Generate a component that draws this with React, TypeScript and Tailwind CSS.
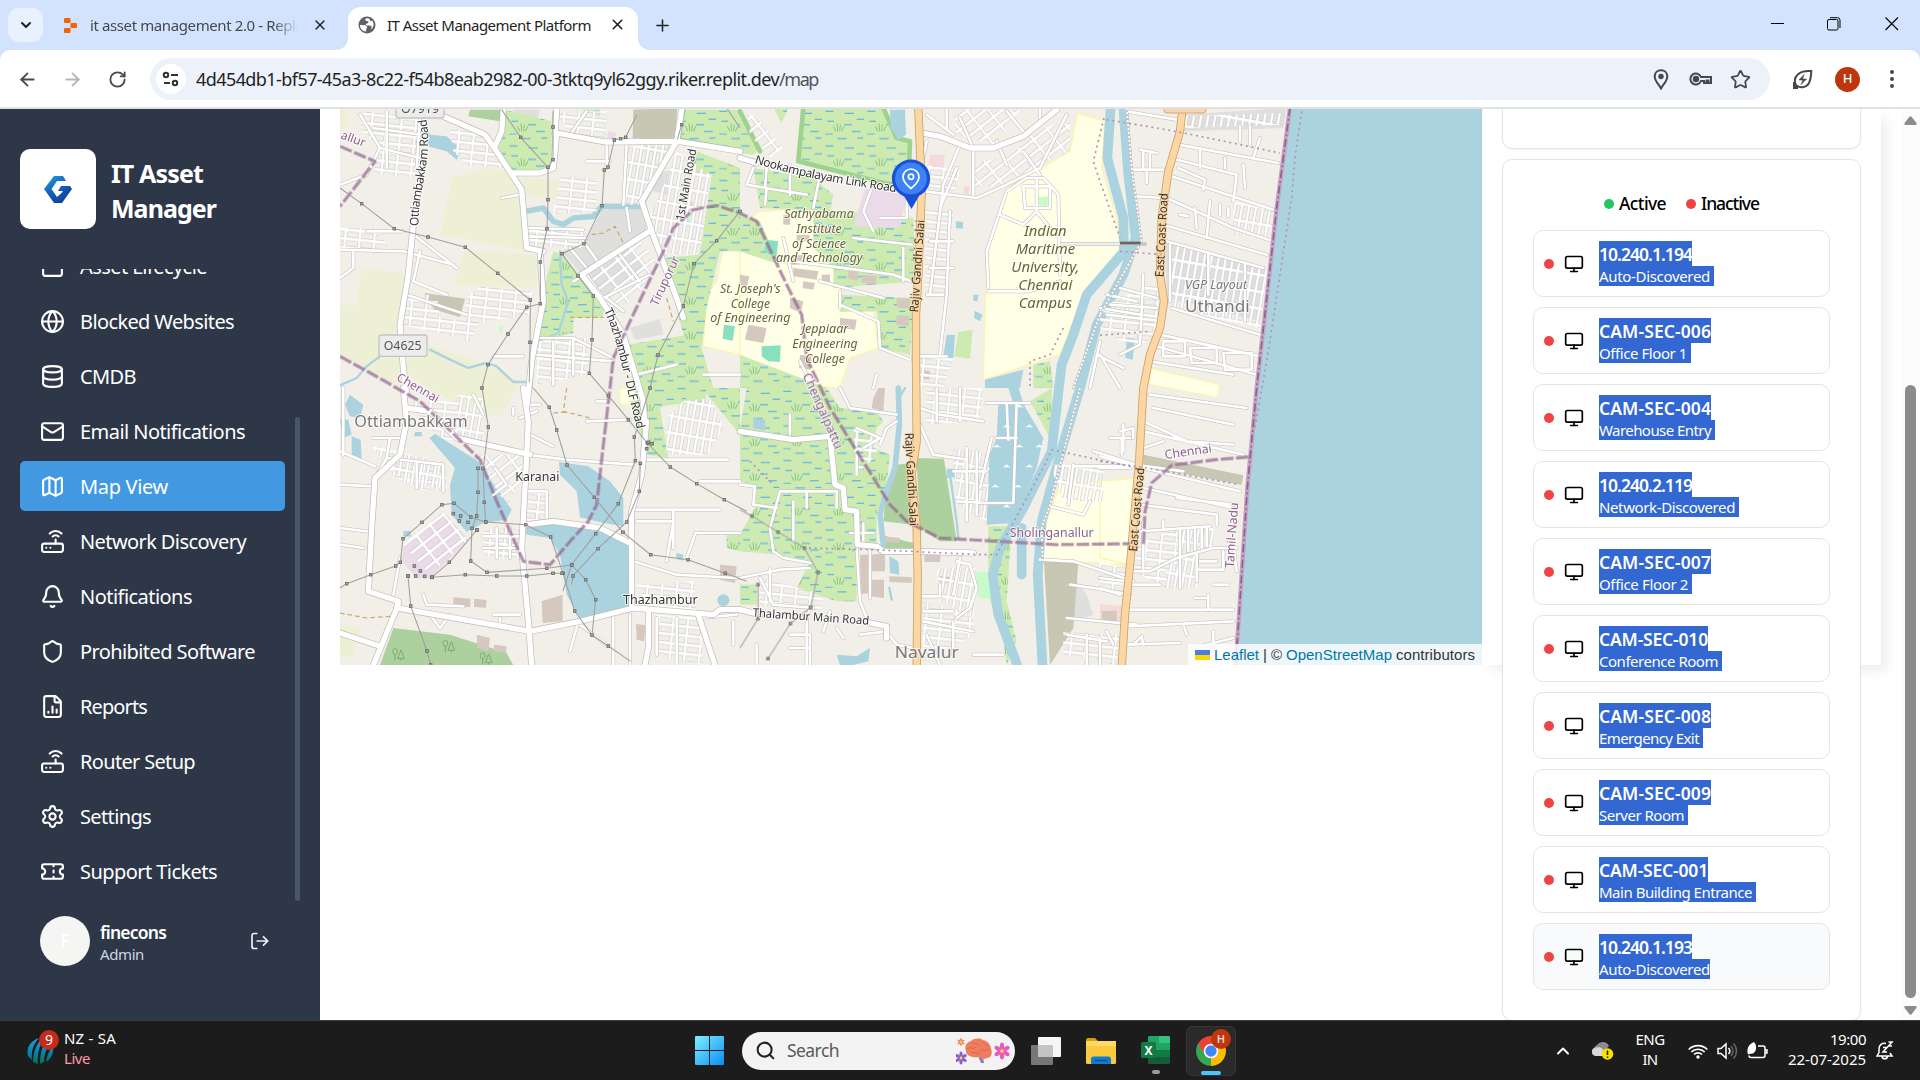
import React, { useLayoutEffect, useRef } from "react";
import {
  Archive, Globe, Database, Mail, Map as MapIcon, Router, Bell, Shield, FileChartColumn, Settings, Ticket,
  Monitor, ArrowLeft, ArrowRight, RotateCw, X, Plus, ChevronDown, ChevronUp, Star, Search,
} from "lucide-react";

/* Text whose letter spacing is adjusted so that it occupies a given width. */
function Fit({ w, children, className = "" }: { w: number; children: string; className?: string }) {
  const ref = useRef<HTMLSpanElement>(null);
  useLayoutEffect(() => {
    const el = ref.current;
    if (!el) return;
    el.style.letterSpacing = "0px";
    const natural = el.getBoundingClientRect().width;
    el.style.letterSpacing = `${(w - natural) / children.length}px`;
  }, [w, children]);
  return <span ref={ref} className={`inline-block whitespace-pre ${className}`}>{children}</span>;
}

/* ------------------------------------------------------------------ map */

type Key = "A" | "B" | "C" | "D" | "E" | "F";
const origin: Record<Key, string> = {
  A: "translate(340 108) scale(.33333)",
  B: "translate(740 108) scale(.33333)",
  C: "translate(1100 108) scale(.33333)",
  D: "translate(340 388) scale(.33333)",
  E: "translate(740 388) scale(.33333)",
  F: "translate(1100 388) scale(.33333)",
};
type Shape = [Key, string];

const Areas = ({ list, fill, stroke }: { list: Shape[]; fill: string; stroke?: string }) => (
  <>
    {list.map(([k, p], i) => (
      <polygon key={i} transform={origin[k]} points={p} fill={fill} stroke={stroke} strokeWidth={stroke ? 4 : 0} />
    ))}
  </>
);
const Lines = ({ list, color, width, dash, cap = "round" }: { list: Shape[]; color: string; width: number; dash?: string; cap?: "round" | "butt" }) => (
  <>
    {list.map(([k, d], i) => (
      <path key={i} transform={origin[k]} d={"M" + d} fill="none" stroke={color} strokeWidth={width} strokeDasharray={dash} strokeLinecap={cap} strokeLinejoin="round" />
    ))}
  </>
);

const farms: Shape[] = [
  ["A", "335,210 430,180 515,190 555,250 565,430 300,380"],
  ["A", "375,425 590,440 590,540 340,530"],
  ["A", "65,480 195,495 175,650 0,590 50,590"],
  ["A", "0,590 180,650 185,840 0,740"],
  ["A", "545,205 655,215 655,275 560,265"],
  ["A", "200,690 420,760 540,820 480,930 300,860 200,800"],
  ["A", "0,5 22,5 22,55 0,55"],
  ["D", "0,710 60,715 40,810 0,800"],
];
const greys: Shape[] = [
  ["A", "785,305 900,300 925,360 780,455 735,405"],
  ["A", "735,500 870,410 920,480 800,570"],
  ["A", "665,430 740,400 780,450 725,500"],
  ["A", "870,660 960,632 970,680 885,695"],
  ["A", "945,190 990,190 980,260 940,250"],
  ["A", "1030,280 1060,280 1060,320 1030,320"],
  ["C", "240,20 560,0 550,60 255,70"],
  ["C", "195,400 500,480 480,640 200,570"],
  ["A", "520,5 600,5 590,40 520,30"],
  ["E", "980,590 1010,580 1040,620 1060,680 1010,700 980,660"],
];
const wetlands: Shape[] = [
  ["A", "490,5 635,40 635,185 510,190 470,115"],
  ["A", "640,430 665,440 720,500 790,590 790,630 700,630 700,675 580,700 600,590"],
  ["A", "1035,5 1200,5 1200,130 1015,95"],
  ["A", "1070,130 1200,180 1200,430 1140,430 1100,600 1085,720 1120,840 1200,840 1200,980 1085,840 1030,680 970,450 1080,440 1115,200 1050,190"],
  ["A", "860,710 1045,680 1090,800 1100,880 900,900 880,840"],
  ["D", "870,40 1100,0 960,60 985,210 920,200"],
  ["D", "1160,440 1200,435 1200,490 1160,480"],
  ["B", "190,0 430,0 470,90 515,100 505,220 470,235 175,160"],
  ["B", "0,5 60,120 40,140 0,135"],
  ["B", "100,0 145,0 125,45"],
  ["B", "40,180 220,210 280,260 270,310 60,300"],
  ["B", "220,300 520,330 525,520 280,540 280,480 220,420"],
  ["B", "300,560 520,570 510,740 420,720 410,610 300,610"],
  ["B", "0,320 60,340 120,470 30,440 0,430"],
  ["B", "0,740 130,790 260,840 0,840"],
  ["E", "20,0 260,0 300,60 410,70 430,100 410,120 400,180 450,200 440,290 410,380 410,430 410,470 350,480 350,640 290,640 170,600 210,520 120,500 0,490 0,440 50,350 40,290 0,280 0,120"],
  ["E", "870,40 935,0 935,160"],
  ["E", "745,415 815,415 800,640 830,760 800,831 790,760 745,620"],
  ["E", "0,590 50,590 50,650 0,650"],
  ["B", "880,770 930,760 940,840 880,840"],
  ["A", "725,5 780,5 780,25"],
];
const parks: Shape[] = [["B", "655,672 698,665 690,752 642,745"]];
const woods: Shape[] = [
  ["A", "390,5 485,5 480,40 385,25"],
  ["D", "160,720 330,740 500,795 520,831 120,831"],
  ["E", "530,210 612,212 650,460 600,460 540,420"],
  ["E", "470,230 515,225 520,410 430,400 440,310"],
  ["E", "420,440 520,465 520,480 430,480"],
];
const edu: Shape[] = [
  ["B", "1012,15 1095,40 1085,180 1130,330 1145,430 1040,540 960,740 730,815 740,430 800,240 990,130"],
  ["A", "1150,420 1200,430 1200,740 1090,715 1100,560 1130,520"],
  ["B", "0,430 120,460 300,510 300,610 400,610 415,720 330,750 300,840 120,830 0,740"],
  ["B", "60,310 220,300 280,420 290,540 120,460 100,400 0,390 20,340"],
  ["B", "410,410 490,420 490,490 410,490"],
  ["E", "960,290 1190,270 1170,531 910,515 905,440"],
  ["C", "150,780 360,830 350,868 150,830"],
  ["D", "840,0 905,0 905,50 840,50"],
  ["F", "0,280 105,270 90,530 0,510"],
];
const browns: Shape[] = [
  ["A", "880,5 1012,0 1005,98 878,90"],
  ["A", "255,555 375,572 360,628 285,605 258,575"],
  ["E", "912,520 1015,525 1000,720 930,831"],
  ["F", "130,200 430,262 425,290 130,235"],
];
const pinks: Shape[] = [
  ["B", "375,240 500,260 480,360 340,355"],
  ["D", "310,370 385,455 270,570 230,570 185,520 190,475"],
  ["A", "805,70 830,75 820,100 800,95"],
];
const roses: Shape[] = [
  ["B", "570,140 615,140 610,180 565,175"],
  ["B", "672,235 688,235 688,260 672,260"],
  ["E", "1080,648 1150,655 1140,710 1080,700"],
  ["F", "0,650 60,655 60,710 0,705"],
];
const waters: Shape[] = [
  ["A", "260,55 270,80 320,85 365,125 350,155 320,130 262,115"],
  ["D", "30,20 70,50 60,90 30,85 15,50"],
  ["D", "35,145 62,155 65,215 35,210"],
  ["D", "0,95 25,95 35,140 10,150"],
  ["D", "285,138 415,220 455,280 515,365 500,395 430,405 380,432 335,380 330,290 345,240 268,150"],
  ["D", "657,222 745,235 810,280 850,330 850,415 790,405 720,388 710,310 660,260"],
  ["D", "555,420 640,408 780,425 865,470 868,660 720,690 680,620 660,500 630,450 560,440"],
  ["D", "190,430 212,428 212,446 190,444"],
  ["D", "225,132 245,132 245,145 222,145"],
  ["D", "1010,495 1030,500 1028,518 1008,512"],
  ["B", "450,5 495,5 498,80 475,95 452,60"],
  ["B", "620,680 645,680 640,752 610,745"],
  ["B", "648,340 670,342 668,362 648,360"],
  ["B", "700,560 716,560 712,580 700,578"],
  ["B", "704,608 728,620 720,640 702,630"],
  ["B", "735,815 850,785 840,840 735,840"],
  ["B", "1165,690 1180,700 1175,755 1160,745"],
  ["C", "80,690 104,692 98,755 76,750"],
  ["E", "775,45 845,40 910,150 890,240 820,405 740,410 748,200 770,150"],
  ["E", "620,242 642,242 645,268 620,270"],
  ["E", "448,505 475,520 478,560 450,555"],
  ["E", "290,800 350,805 390,780 385,820 340,831 300,831"],
  ["E", "40,90 75,95 75,128 40,120"],
  ["C", "570,0 530,300 497,600 470,840 442,1140 425,1400 408,1610 402,1690 1150,1690 1150,0"],
];
const greens: Shape[] = [
  ["B", "80,395 115,400 108,450 72,430"],
  ["B", "65,715 122,712 120,762 85,760 65,745"],
  ["A", "1152,650 1185,655 1178,698 1148,692"],
  ["E", "720,565 745,568 742,590 720,588"],
];
const mints: Shape[] = [
  ["E", "708,552 752,552 752,632 716,630"],
  ["B", "895,268 925,265 922,295 898,292"],
  ["A", "480,652 490,655 486,675 476,672"],
  ["A", "1025,330 1052,325 1050,350"],
];
const buildings: Shape[] = [
  ["B", "150,445 190,440 180,470 150,470"], ["B", "160,480 235,490 230,515 160,505"], ["B", "245,500 270,500 270,525 245,525"],
  ["B", "325,490 355,492 352,518 325,512"], ["B", "365,500 410,505 408,530 365,525"], ["B", "470,570 510,572 508,602 470,598"],
  ["B", "470,622 508,624 506,655 468,650"], ["B", "25,650 80,660 70,705 15,695"], ["B", "150,570 190,580 182,615 150,600"],
  ["B", "300,630 350,635 345,665 300,660"], ["B", "180,740 215,745 210,785 178,780"], ["B", "545,785 570,790 568,815 545,812"],
  ["B", "0,500 28,505 20,540 0,530"], ["B", "170,380 210,382 205,400 170,398"], ["B", "130,320 150,320 150,350 130,350"],
  ["B", "230,355 290,360 285,378 230,375"], ["B", "190,520 225,525 220,545 188,540"],
  ["E", "360,500 392,500 390,615 362,618"], ["E", "392,500 435,495 435,550 392,550"], ["E", "392,575 432,575 432,630 392,625"],
  ["E", "553,495 602,492 600,522 553,522"], ["E", "448,565 516,568 515,585 448,582"], ["E", "1085,670 1125,668 1130,700 1090,702"],
  ["E", "415,0 435,0 430,70 395,60 400,30"], ["E", "600,565 635,567 632,585 600,583"], ["E", "430,445 480,450 478,465 430,462"],
  ["D", "340,628 392,632 390,658 340,654"], ["D", "402,632 440,636 437,660 402,656"], ["D", "605,640 668,620 668,700 608,705"],
  ["D", "1140,530 1190,535 1185,585 1140,575"], ["D", "888,708 918,712 912,760 890,755"], ["D", "410,740 450,750 445,790 412,780"],
  ["D", "462,770 500,775 498,795 462,790"], ["F", "5,670 50,668 50,705 8,705"],
];

/* dense residential blocks, drawn with repeating street patterns */
const blocks0: Shape[] = [
  ["A", "70,10 250,30 235,210 100,200 120,120 60,60"],
  ["A", "330,60 430,80 470,130 500,180 390,180 340,130"],
  ["A", "560,360 745,365 735,420 565,420"],
  ["A", "420,535 575,550 570,620 370,650 380,570"],
  ["A", "195,560 290,560 300,630 420,640 390,700 190,650"],
  ["A", "0,360 110,360 150,430 0,430"],
  ["A", "650,10 800,10 795,95 690,80"],
  ["A", "665,200 770,210 770,310 640,320"],
  ["A", "590,700 740,690 740,800 590,830"],
  ["D", "200,40 360,40 400,180 280,140"],
  ["D", "140,210 315,220 320,310 230,300 150,260"],
  ["D", "430,420 540,420 535,510 435,505"],
  ["D", "560,310 620,310 620,400 560,410"],
  ["D", "890,590 1060,580 1070,680 930,660"],
  ["D", "950,680 1080,690 1090,831 945,800"],
  ["B", "560,170 660,190 640,255 560,250"],
  ["B", "560,300 640,310 620,560 555,550"],
  ["B", "540,740 640,750 610,840 540,840"],
  ["C", "0,600 170,520 180,680 100,720 0,660"],
  ["E", "560,0 730,0 720,100 560,110"],
  ["E", "340,110 410,140 410,200 350,260 345,200"],
  ["E", "550,640 700,680 700,740 550,820"],
  ["E", "60,570 250,620 240,680 60,650"],
  ["E", "970,730 1140,740 1130,831 970,800"],
  ["F", "110,470 230,420 240,520 200,600 100,550"],
  ["F", "0,520 85,540 80,640 0,600"],
];
const blocks1: Shape[] = [
  ["A", "865,115 1000,115 930,240 910,290 850,290"],
  ["A", "1010,130 1110,200 1080,440 960,435 925,330 960,260"],
  ["A", "880,200 900,110 1010,105 940,230"],
  ["D", "1030,40 1110,30 1150,120 1100,200 980,200 980,90"],
  ["D", "350,20 430,30 430,170 350,150"],
  ["D", "90,170 320,230 320,300 200,290"],
  ["E", "640,180 750,200 740,400 650,350"],
  ["E", "930,230 1090,230 1090,340 970,340"],
  ["E", "590,540 710,540 700,690 600,640"],
  ["C", "240,25 555,15 550,50 250,60"],
  ["C", "205,400 500,480 480,660 210,600"],
  ["C", "400,280 530,310 500,390 400,380"],
  ["F", "230,420 340,415 340,480 230,510"],
  ["F", "200,520 300,500 290,600 190,600"],
];
const blocks2: Shape[] = [
  ["B", "640,5 840,5 760,110 650,80"],
  ["B", "800,150 900,60 990,40 990,130 800,220"],
  ["B", "700,160 800,150 800,230 700,240"],
  ["D", "190,470 310,372 385,455 270,560"],
  ["D", "400,200 550,200 545,280 500,350 440,260"],
  ["A", "740,500 900,400 960,480 830,620"],
  ["B", "20,10 60,40 130,120 90,150 30,80"],
];

const minor: Shape[] = [
  ["A", "0,425 190,430 340,470M240,430L220,520 320,560M60,20L120,120 80,200 0,230M120,120L240,150M190,370L80,370M215,375L350,480M200,560L380,620M40,430V480L0,510"],
  ["A", "485,270L540,260M560,360L730,365M560,385L740,390M590,690L700,690 820,750M590,740L820,760M460,745H550M640,700V830M700,690V800"],
  ["A", "690,80L740,10M740,160H810M800,100V180M860,110L850,290M860,300L870,370M920,360L970,440M240,20L230,180M100,60L240,80M140,10V180"],
  ["A", "740,500L790,570 930,500M800,570L850,610M700,520L735,500M690,420L740,480M730,400L780,470M840,440L900,520M890,800L1010,770M1090,800H1200"],
  ["B", "40,180L20,230 80,240 75,290M80,180L75,240 200,260M150,170V260M240,200L220,300M395,240L370,310 400,370M500,260V330H420"],
  ["B", "340,390L515,410M120,455L460,500 515,520M240,520L430,570M300,550V600M300,590L415,640 420,720 510,755M490,420V520M130,390L160,520"],
  ["B", "555,250L710,270 800,230M560,100L540,200M660,110L610,230 570,560M700,130V260M650,180L600,300M630,310L620,560 600,740M570,400H640M570,480H640M560,560H610"],
  ["B", "700,120L660,30M770,100L800,170M850,70L800,10M900,40V5M980,20L900,180 800,230M560,20L640,80M620,5V60M850,130L900,200"],
  ["B", "745,540L740,430 800,250 860,210 910,210 955,260 960,500M745,550H870L960,520M780,320L850,350 890,310 930,360M890,210V310M850,235H930V300H855Z"],
  ["B", "520,745H620M410,800L400,840M200,800L180,760M1070,740L1150,780M1080,700L1050,840M1080,600L1200,620M1100,560L1190,580"],
  ["C", "235,110L535,165M210,150L410,200 400,280M215,205L520,305M200,270L400,360 520,400M190,350L500,440M200,400L490,480M300,120V180M330,280L320,390"],
  ["C", "80,10L230,35M100,185H190M110,265L190,270M215,600L480,680M180,680L480,745M170,715L470,800M150,760L400,800M480,90L460,150M210,410V580M325,435V560M435,470V640"],
  ["C", "30,590L170,600M20,620L190,640M60,540L170,570M130,500L120,710 60,740M0,740L60,840M190,700H255V745H190ZM270,720H350V765H275ZM370,735H455V785H375Z"],
  ["C", "235,180L315,215 310,245M375,150V180M360,290V320M385,300V325M240,320L265,325M285,300L290,360M120,125L170,135M130,130V185M150,130V180M140,185V225M430,170L435,240M420,55V100M450,55V110"],
  ["D", "0,290L100,295M105,270L140,210 310,230 310,310M140,210L150,150M230,220V300M0,420L80,430M180,510L160,620M250,620L260,650 370,655M0,470L70,480"],
  ["D", "570,140L640,175M560,200L680,215 880,230M880,365H1140M890,400H1000L980,520M880,520L1010,560 1190,570M1065,435H1200M910,215H1165M1080,280H1200"],
  ["D", "560,310H620V400M430,445H540M430,480H540M470,420V510M510,420V510M465,240L500,290 460,320M360,150L560,200M1000,370V480M1040,510L1065,440"],
  ["D", "0,190L105,235M715,700L690,790M820,680V831M870,680V831M950,690V800M1010,690V831M720,710L800,770M1080,690L1190,680M10,0V200M100,150H180"],
  ["D", "480,690V720M460,680H540M270,680L300,720 330,680M740,100L870,95M400,20L430,80M560,50H600M540,90L590,70M1180,700V770M770,40H800M520,60V80"],
  ["E", "300,0L330,60 470,80M470,100L440,120 420,170M350,120L420,150 370,180M350,200L350,260M540,60L600,80 730,100M590,0V100M660,0V100M540,110L580,200 680,215"],
  ["E", "740,45H870M770,150H830M800,45L805,155M830,45L820,345H740M650,340L740,345M680,180V400M710,190V380M640,250H740M755,150L720,300"],
  ["E", "0,290L45,295 40,350 110,360M125,310H290V360M200,310V360M160,340V460M120,310L90,420 100,490 130,510 215,525M0,570L120,545 210,540M60,570L100,650 220,660M90,540V640"],
  ["E", "350,480L360,640 380,690M390,490V630M545,625H600V590M660,510L640,620M650,520L690,530 710,600 690,660 650,690M550,670H640M550,700L700,730M560,740L600,831M640,700V800M700,800H790"],
  ["E", "150,740H210V831M150,780H210M290,720L310,750M360,740L440,730 470,770 520,780M900,515L1000,520 1180,580M930,355L1030,380 1050,340M1000,230L985,350M1000,235H1180M1060,190L1190,230"],
  ["E", "990,590L1060,600 1170,620M980,690L1190,710M980,740L1100,760M1040,740V831M1080,750V831M1110,150H1170M1150,110V190M50,770V831M200,690V831M270,670L250,730M150,80V140M330,435H400M370,405V465"],
  ["F", "150,20L440,60M160,60L400,110M130,100L260,160 400,170M130,130L430,200M130,180L190,160M0,205L70,225 250,250M130,240L420,310M130,300L400,360M120,350L350,380V410M230,330L400,350"],
  ["F", "120,430L330,415M90,550L150,550 230,510 340,480 410,480M240,420V600M265,420V490M285,420V485M305,420V480M320,420V475M90,590H180M90,665H400M80,715L400,700M70,770L240,765M280,780L400,750M130,400V550M190,400V420"],
  ["F", "325,620V665M285,630H325M340,590H385M250,710L260,740M340,730V770M290,545H370M290,500V580M350,520H300M0,600L60,620M0,570L80,580M20,730L40,770M100,770L125,745 130,770"],
  ["F", "45,150H65V200M60,130L100,120V150M0,240H90M370,490V540M400,470L410,550"],
];
const roads: Shape[] = [
  ["A", "310,25L435,80 470,130 545,245 560,420 610,430"],
  ["A", "490,5L485,70 465,115"],
  ["A", "515,195L600,195 640,180 650,75 795,102 1015,100 1200,130"],
  ["A", "650,5L645,80"],
  ["A", "1025,5L1010,100 905,280 935,370 1010,570 1030,630"],
  ["A", "725,500L935,365M725,500L780,570 850,680 910,880 915,960"],
  ["A", "225,300L215,400 205,500 180,650 190,780 200,860"],
  ["D", "190,0L200,100 180,200 105,270 95,420 85,610 175,640 170,660 570,730 720,700 880,660 1120,680 1140,665 1200,665"],
  ["D", "175,650L100,831M0,735L120,775"],
  ["D", "200,60L270,70 350,150 570,200"],
  ["D", "550,0L565,100 555,300 545,480 565,700 575,831"],
  ["D", "560,410L640,400 780,420 870,465"],
  ["D", "920,100L905,260 875,370 875,660"],
  ["D", "925,670V780L915,831M1075,680L1125,831"],
  ["B", "0,150L50,165"],
  ["B", "545,75L600,85 690,120 760,120 850,85 950,5"],
  ["E", "0,130L160,155 270,145 285,290 310,300 315,365 350,370 352,470 410,475 430,490 530,490 700,495"],
  ["E", "0,665L60,680M390,705L440,715 440,750"],
  ["A", "600,430L610,580 575,760 560,900"],
];
const railway: Shape[] = [["C", "80,0L95,180 125,400 0,620M0,620L-80,840"], ["E", "1020,0L930,350 905,420 908,520"]];
const canals: Shape[] = [
  ["B", "1112,0L1102,150 1150,330 1152,430 1040,560 1000,680 965,770 945,940 935,1030 850,1200 780,1320 758,1400 775,1520 835,1680"],
  ["B", "1150,0L1165,200 1187,390 1150,500 1070,650 1020,840 960,1040 905,1240 893,1400 908,1680"],
  ["E", "820,0L840,60M845,420L845,560"],
];
const streams: Shape[] = [
  ["A", "560,310L610,300 640,340 670,350 700,330 760,325 785,295 900,295"],
  ["E", "475,0L478,110 465,240 440,310 420,380 430,470"],
];
const creeks: Shape[] = [
  ["A", "270,725L330,755 385,780 440,765 470,775 520,822 560,822M0,832L50,810 80,775 120,745"],
  ["A", "660,430L665,530 685,580 655,675 580,705 575,840M1015,100L915,280"],
  ["E", "630,260L650,400 655,450M448,600L455,635M495,0L478,30"],
];
const orange: Shape[] = [
  ["B", "535,0L545,250 535,500 528,620 528,760 530,1000 515,1100 530,1260 533,1400 530,1680"],
  ["C", "248,0L240,70 205,190 185,330 180,500 192,580 180,660 150,740 130,840 118,1050 92,1350 75,1520 65,1680"],
];
const coast: Shape[] = [["C", "570,0L530,300 497,600 470,840 442,1140 425,1400 416,1540 405,1690"]];
const boundary: Shape[] = [
  ["A", "0,115L105,160 0,295"],
  ["A", "0,745L100,800 240,880 420,1055 470,1180 550,1360 630,1370 690,1300 745,1240 770,1190 790,1010 810,840 820,750 870,640 970,430 1000,360 1060,305 1130,292 1200,315 1250,340 1340,530 1385,620 1400,750 1470,900 1650,1190 1700,1240 1800,1290 2150,1310 2370,1307"],
  ["F", "130,468L135,370 155,285 215,232 345,215 445,207"],
];
const dotted: Shape[] = [
  ["B", "1092,30L1060,160 1080,220 1140,390M970,660L930,740 870,760V840"],
  ["C", "20,35L200,65 350,95 540,135M60,430L190,440M0,682L150,670M605,10L585,150 575,270 555,400 525,600 500,760 465,960"],
  ["E", "190,480L400,485 720,500 770,500 800,440 920,220 935,185 1190,240M30,220L100,290"],
  ["F", "0,220L140,240 420,290"],
];
const power: Shape[] = [
  ["A", "0,240L65,287 163,362 264,387 376,418 473,496 571,576 570,703 568,823"],
  ["A", "485,5L542,88 624,178"],
  ["A", "639,10V57L639,155 624,178 624,275 621,362 601,462 601,587 560,598 504,678 444,770 426,840 445,957 430,1080"],
  ["A", "890,22L857,88 842,92 823,96 804,177 793,186 786,293 732,407 666,437 714,504 760,564 756,695 748,796 805,863 865,935 922,1005 991,1077 1070,1127 1153,1175 1220,1210"],
  ["A", "1012,95L1025,50M1200,310L1130,398 1062,467 1030,594 954,741 930,840 883,987 886,1058 835,1187 767,1277 695,1370 669,1449"],
  ["A", "1160,0L1200,60"],
  ["D", "580,0L628,58 650,126 681,231 763,328 849,433 932,500 1044,515 1156,556 1220,580"],
  ["D", "0,600L20,587 92,560 167,534 181,523 189,452 246,403 306,350 342,346 392,387 437,402 557,410 632,447 669,556 704,669 756,741 805,774 872,820"],
  ["D", "414,241V313L410,384 396,421 392,519 441,553 620,541 695,531 737,575 767,635 756,741"],
  ["D", "429,241L433,343 437,402M328,523L411,426M204,564L212,654 261,789 272,831M276,568L376,560 470,564 560,564 639,556 666,556M275,568L328,523"],
  ["D", "901,226L898,310 860,402 774,482 699,564 695,590"],
  ["E", "0,365L36,384 114,432 193,480 234,553 212,658 151,707 84,812M54,590V692L0,780"],
];
/* isolated pylons around the two substations */
const pylons = [[340, 377], [362, 384], [358, 399], [384, 403], [223, 534], [241, 549], [227, 564], [254, 565], [204, 564], [276, 568], [414, 241], [429, 241], [411, 426], [901, 226], [925, 163], [936, 167], [920, 182]];

type Label = { k: Key; t: string; x: number; y: number; s: number; w: number; c: string; r?: number; i?: boolean };
const dark = "#333333", purple = "#8d618b", olive = "#66662f", grey = "#777777";
const labels: Label[] = [
  { k: "A", t: "allur", x: 36, y: 104, s: 36, w: 76, c: purple, r: 20 },
  { k: "A", t: "Tiruporur", x: 986, y: 524, s: 36, w: 160, c: purple, r: -65 },
  { k: "A", t: "1st Main Road", x: 1050, y: 232, s: 35, w: 218, c: dark, r: -80 },
  { k: "A", t: "Chennai", x: 228, y: 850, s: 36, w: 140, c: purple, r: 30 },
  { k: "B", t: "Sathyabama", x: 237, y: 330, s: 38, w: 208, c: olive, i: true },
  { k: "B", t: "Institute", x: 237, y: 374, s: 38, w: 136, c: olive, i: true },
  { k: "B", t: "of Science", x: 237, y: 419, s: 38, w: 162, c: olive, i: true },
  { k: "B", t: "and Technology", x: 238, y: 463, s: 38, w: 260, c: olive, i: true },
  { k: "B", t: "St. Joseph's", x: 31, y: 555, s: 38, w: 182, c: olive, i: true },
  { k: "B", t: "College", x: 31, y: 599, s: 38, w: 118, c: olive, i: true },
  { k: "B", t: "of Engineering", x: 31, y: 643, s: 38, w: 240, c: olive, i: true },
  { k: "B", t: "Jeppiaar", x: 255, y: 674, s: 38, w: 140, c: olive, i: true },
  { k: "B", t: "Engineering", x: 255, y: 719, s: 38, w: 196, c: olive, i: true },
  { k: "B", t: "College", x: 255, y: 764, s: 38, w: 120, c: olive, i: true },
  { k: "B", t: "Indian", x: 916, y: 385, s: 45, w: 128, c: olive, i: true },
  { k: "B", t: "Maritime", x: 916, y: 438, s: 45, w: 178, c: olive, i: true },
  { k: "B", t: "University,", x: 916, y: 492, s: 45, w: 204, c: olive, i: true },
  { k: "B", t: "Chennai", x: 916, y: 545, s: 45, w: 162, c: olive, i: true },
  { k: "B", t: "Campus", x: 916, y: 599, s: 45, w: 160, c: olive, i: true },
  { k: "B", t: "Rajiv Gandhi Salai", x: 544, y: 475, s: 36, w: 278, c: dark, r: -86 },
  { k: "E", t: "Rajiv Gandhi Salai", x: 502, y: 275, s: 36, w: 280, c: dark, r: 87 },
  { k: "C", t: "East Coast Road", x: 197, y: 382, s: 36, w: 252, c: dark, r: -87 },
  { k: "C", t: "VGP Layout", x: 348, y: 543, s: 36, w: 186, c: grey, i: true },
  { k: "C", t: "Uthandi", x: 352, y: 613, s: 51, w: 194, c: grey },
  { k: "D", t: "Ottiambakkam", x: 213, y: 116, s: 48, w: 340, c: grey },
  { k: "D", t: "Karanai", x: 592, y: 279, s: 39, w: 132, c: dark },
  { k: "D", t: "Thazhambur", x: 961, y: 647, s: 39, w: 224, c: dark },
  { k: "E", t: "Thalambur Main Road", x: 212, y: 698, s: 35, w: 350, c: dark, r: 4 },
  { k: "E", t: "Navalur", x: 560, y: 809, s: 51, w: 192, c: grey },
  { k: "E", t: "Sholinganallur", x: 935, y: 446, s: 37, w: 252, c: purple },
  { k: "E", t: "Chengalpattu", x: 236, y: 74, s: 36, w: 245, c: purple, r: 66 },
  { k: "F", t: "Chennai", x: 266, y: 203, s: 37, w: 142, c: purple, r: -8 },
  { k: "F", t: "East Coast Road", x: 122, y: 366, s: 36, w: 252, c: dark, r: -85 },
  { k: "F", t: "Tamil-Nadu", x: 408, y: 442, s: 37, w: 196, c: purple, r: -86 },
];
const curved: { k: Key; id: string; d: string; t: string; w: number }[] = [
  { k: "A", id: "otti", d: "M227,354C222,250 272,150 250,36", t: "Ottiambakkam Road", w: 322 },
  { k: "A", id: "dlf", d: "M800,604C837,680 852,760 868,830S890,920 900,964", t: "Thazhambur - DLF Road", w: 372 },
  { k: "B", id: "nook", d: "M45,156C200,206 350,224 470,244", t: "Nookampalayam Link Road", w: 434 },
];

const Tuft = ({ x, y }: { x: number; y: number }) => (
  <path d={`M${x},${y}l-8,-15M${x + 5},${y}l-2,-23M${x + 11},${y}l2,-21M${x + 16},${y}l8,-15`} stroke="#86c486" strokeWidth="3" fill="none" />
);

const CityMap = () => (
  <svg className="block h-full w-full" viewBox="340 109 1142 556" fontFamily="'Noto Sans', sans-serif">
    <defs>
      <pattern id="wet" width="126" height="104" patternUnits="userSpaceOnUse">
        <rect width="126" height="104" fill="#cdebb0" />
        <path d="M4,10h24M62,16h28M98,34h22M10,40h20M60,50h24M84,70h26M4,78h22M40,92h28M100,90h18" stroke="#62b3ea" strokeWidth="3.6" />
        <Tuft x={36} y={70} />
      </pattern>
      <pattern id="b0" width="44" height="27" patternUnits="userSpaceOnUse" patternTransform="rotate(6)">
        <path d="M0,10H44M12,0V27" stroke="#c2c0be" strokeWidth="11" />
        <path d="M0,10H44M12,0V27" stroke="#fff" strokeWidth="8" />
      </pattern>
      <pattern id="b1" width="21" height="50" patternUnits="userSpaceOnUse" patternTransform="rotate(10)">
        <path d="M0,10H21M9,0V50" stroke="#c2c0be" strokeWidth="11" />
        <path d="M0,10H21M9,0V50" stroke="#fff" strokeWidth="8" />
      </pattern>
      <pattern id="b2" width="52" height="32" patternUnits="userSpaceOnUse" patternTransform="rotate(-38)">
        <path d="M0,10H52M12,0V32" stroke="#c2c0be" strokeWidth="11" />
        <path d="M0,10H52M12,0V32" stroke="#fff" strokeWidth="8" />
      </pattern>
      <marker id="pole" markerWidth="12" markerHeight="12" refX="6" refY="6" markerUnits="userSpaceOnUse">
        <rect x="2" y="2" width="8" height="8" fill="#aaa" stroke="#666" strokeWidth="2.5" />
      </marker>
      {curved.map((c) => <path key={c.id} id={c.id} d={c.d} />)}
    </defs>
    <rect x="340" y="109" width="1142" height="556" fill="#f2efe9" />
    <Areas list={farms} fill="#eef0d5" />
    <Areas list={greys} fill="#dfdfde" />
    <Areas list={edu} fill="#ffffe5" stroke="#faf5b0" />
    <Areas list={wetlands} fill="url(#wet)" />
    <Areas list={parks} fill="#cdebb0" />
    <Lines list={[["B", "190,0L175,160 470,235 505,220 510,100 470,90 430,0M0,10L60,130"], ["A", "1030,5L1015,95 1200,130"]]} color="#9ed28f" width={14} />
    <Areas list={woods} fill="#add19e" />
    <Areas list={browns} fill="#c7c7b4" />
    <Areas list={pinks} fill="#ebdbe8" />
    <Areas list={roses} fill="#f6d9d9" />
    <Areas list={buildings} fill="#d4c8bf" />
    <Areas list={waters} fill="#aad3df" />
    <Areas list={greens} fill="#88e0be" />
    <Areas list={mints} fill="#c8facc" />
    <circle transform={origin.D} cx="1150" cy="637" r="18" fill="#aad3df" />
    <Lines list={canals} color="#aad3df" width={29} />
    <Lines list={streams} color="#aad3df" width={17} />
    <Lines list={creeks} color="#aad3df" width={7} />
    <Areas list={blocks0} fill="url(#b0)" />
    <Areas list={blocks1} fill="url(#b1)" />
    <Areas list={blocks2} fill="url(#b2)" />
    <Lines list={minor} color="#bdbbb9" width={11} />
    <Lines list={minor} color="#ffffff" width={8} />
    <Lines list={roads} color="#bdbbb9" width={20} />
    <Lines list={roads} color="#ffffff" width={16} />
    <Lines list={railway} color="#bcbcbc" width={7} />
    <Lines list={railway} color="#ffffff" width={5} dash="7 5" cap="butt" />
    <g transform={origin.B} fill="none">
      <path d="M960,408H1220" stroke="#c4c4c4" strokeWidth="10" />
      <path d="M960,408H1140" stroke="#eee" strokeWidth="6" />
      <path d="M1140,405H1202" stroke="#666" strokeWidth="8" />
    </g>
    <g transform={origin.E} fill="#fff">
      {[[838, 58], [800, 118], [868, 118], [770, 178], [838, 178], [898, 178], [800, 238], [868, 238], [766, 298], [834, 298], [800, 358]].map(([x, y], i) => (
        <path key={i} d={`M${x - 13},${y}q7,-1 13,-9q6,8 13,9z`} />
      ))}
    </g>
    <Lines list={[["A", "690,628H790M755,380L790,375 825,355 850,405M980,570L1000,640"], ["D", "0,675L80,690 155,685M680,0L670,70 750,90M640,75L680,72"]]} color="#c9a76a" width={3.5} dash="14 9" cap="butt" />
    <Lines list={orange} color="#c9a360" width={25} />
    <Lines list={orange} color="#fcd6a4" width={20} />
    <Lines list={coast} color="#c3a3c3" width={13} />
    <Lines list={coast} color="#935f93" width={5} dash="24 9 5 9" cap="butt" />
    <g opacity=".72"><Lines list={boundary} color="#93658f" width={9.5} dash="38 8" cap="butt" /></g>
    <Lines list={dotted} color="#b191b6" width={5} dash="6 11" cap="butt" />
    {power.map(([k, d], i) => (
      <path key={i} transform={origin[k]} d={"M" + d} fill="none" stroke="#a0a09d" strokeWidth="3.2" markerMid="url(#pole)" />
    ))}
    <g transform={origin.D} fill="#aaa" stroke="#666" strokeWidth="2.500">
      {pylons.map(([x, y], i) => <rect key={i} x={x - 4} y={y - 4} width="8" height="8" />)}
    </g>
    <g transform={origin.D} fill="none" stroke="#7ba972" strokeWidth="3">
      {[[165, 800], [316, 775], [428, 812]].map(([x, y], i) => (
        <path key={i} d={`M${x},${y + 18}v-18a7,9 0 1 1 .1,0M${x + 18},${y + 18}v-6M${x + 18},${y - 14}l-10,26h20z`} />
      ))}
    </g>
    <g textAnchor="middle" strokeLinejoin="round">
      {labels.map((l, i) => (
        <text key={i} transform={`${origin[l.k]} translate(${l.x} ${l.y}) rotate(${l.r || 0})`} fontSize={l.s} textLength={l.w} lengthAdjust="spacingAndGlyphs" fill={l.c} stroke={l.t.startsWith("Rajiv") || l.t.startsWith("East") ? "#fcd6a4" : "#ffffff"} strokeOpacity=".75" strokeWidth="6" paintOrder="stroke" fontStyle={l.i ? "italic" : "normal"}>{l.t}</text>
      ))}
    </g>
    {curved.map((c) => (
      <text key={c.id} transform={origin[c.k]} fontSize="36" fill={dark} stroke="#fff" strokeOpacity=".8" strokeWidth="6" paintOrder="stroke" dy="9">
        <textPath href={`#${c.id}`} textLength={c.w}>{c.t}</textPath>
      </text>
    ))}
    <g transform={origin.A} fill="#ececec" stroke="#c3c3c3" strokeWidth="4" fontSize="37">
      <rect x="168" y="-26" width="144" height="56" rx="8" />
      <rect x="117" y="681" width="144" height="64" rx="8" />
      <text x="183" y="16" textLength="114" fill="#555" stroke="none">O7919</text>
      <text x="131" y="726" textLength="114" fill="#555" stroke="none">O4625</text>
    </g>
    <rect x="1164" y="103" width="42" height="10" rx="3" fill="#f8d5b0" stroke="#d8a878" />
    <path d="M904,196h15l-7.500,13z" fill="#1d4ed8" />
    <circle cx="911" cy="178.500" r="17.500" fill="#3b82f6" stroke="#1d4ed8" strokeWidth="3.200" />
    <path d="M919,177c0,5-5.500,9.500-8,11.500c-2.500-2-8-6.500-8-11.500a8,8 0 0 1 16,0z" fill="none" stroke="#fff" strokeWidth="1.700" />
    <circle cx="911" cy="176.800" r="2.600" fill="none" stroke="#fff" strokeWidth="1.700" />
  </svg>
);

/* -------------------------------------------------------------- browser */

const Replit = () => (
  <svg className="ml-[21px] h-[15px] w-[13px]" viewBox="0 0 13 15" fill="#f26207">
    <rect width="6.500" height="5" rx="1" /><rect x="6.500" y="5" width="6.500" height="5" rx="1" /><rect y="10" width="6.500" height="5" rx="1" />
  </svg>
);

const TabStrip = () => (
  <div className="flex h-[50px] items-start bg-[#d3e3fd] text-[15px] text-[#1f1f1f]">
    <div className="mt-2 ml-2 flex h-[34px] w-[35px] items-center justify-center rounded-[11px] bg-[#e9f1fe]">
      <ChevronDown size={16} strokeWidth={3} />
    </div>
    <div className="mt-[7px] flex h-[36px] w-[293px] items-center">
      <Replit />
      <div className="ml-[13px] w-[208px] overflow-hidden [mask-image:linear-gradient(to_right,black_88%,transparent)]">
        <Fit w={214} className="text-[#45494e]">it asset management 2.0 - Replit</Fit>
      </div>
      <X className="ml-[14px]" size={16} strokeWidth={2} />
    </div>
    <div className="mt-[37px] h-[13px] w-3 bg-white"><div className="h-full w-full rounded-br-[12px] bg-[#d3e3fd]" /></div>
    <div className="mt-[7px] flex h-[43px] w-[290px] items-start rounded-t-[13px] bg-white">
      <svg className="mt-[9px] ml-[10px]" width="18" height="18" viewBox="0 0 18 18">
        <circle cx="9" cy="9" r="8.500" fill="#5f6368" />
        <path d="M2,9c2,0 3,.5 5,0c1,1 2,1 2,2s-1,1.500-1,4.500C4,15 2,12.500 2,9zM7,3c1,1 0,2 2,2s2,2 0,2.500s-1,2 .5,2s3.500-.5 4,1s-1,3-1,3C16,12 16.500,7 14,4.500C12,6 11,4 12,3C10,2 8.500,2 7,3z" fill="#fff" />
      </svg>
      <div className="mt-[7px] ml-[11px]"><Fit w={204}>IT Asset Management Platform</Fit></div>
      <X className="mt-[9px] ml-[18px]" size={17} strokeWidth={2.2} />
    </div>
    <div className="mt-[37px] h-[13px] w-3 bg-white"><div className="h-full w-full rounded-bl-[12px] bg-[#d3e3fd]" /></div>
    <Plus className="mt-[16px] ml-[3px]" size={19} strokeWidth={1.9} />
    <div className="mt-[17px] mr-[21px] ml-auto flex gap-[44px] text-black">
      <svg className="-mr-[2px]" width="16" height="14" viewBox="0 0 16 14"><path d="M2,6.500H15" stroke="currentColor" /></svg>
      <svg width="14" height="14" viewBox="0 0 14 14" fill="none" stroke="currentColor"><rect x=".5" y="2.500" width="10.500" height="10.500" rx="1.500" /><path d="M3,.7H10.500a2.500,2.500 0 0 1 2.500,2.500V11" /></svg>
      <svg width="14" height="14" viewBox="0 0 14 14"><path d="M.5,.5L13,13M13,.5L.5,13" stroke="currentColor" strokeWidth="1.100" /></svg>
    </div>
  </div>
);

const Toolbar = () => (
  <div className="bg-[#d3e3fd]">
    <div className="flex h-[57px] items-center rounded-t-[10px] bg-white pt-px text-[#45484c]">
      <ArrowLeft className="ml-[17px]" size={21} strokeWidth={2.1} />
      <ArrowRight className="ml-[24px] text-[#b4b5b6]" size={21} strokeWidth={2.1} />
      <RotateCw className="ml-[25px]" size={19} strokeWidth={2.3} />
      <div className="ml-[23px] flex h-[42px] w-[1620px] items-center rounded-full bg-[#ecf1fa]">
        <div className="ml-[6px] flex h-[30px] w-[30px] items-center justify-center rounded-full bg-white">
          <svg width="18" height="18" viewBox="0 0 18 18" fill="none" stroke="#303336" strokeWidth="2"><circle cx="4" cy="5" r="2.200" /><path d="M9,5h7M2,13h6" /><circle cx="13" cy="13" r="2.200" /></svg>
        </div>
        <div className="ml-[10px] text-[18px] text-[#1f1f1f]">
          <Fit w={583}>4d454db1-bf57-45a3-8c22-f54b8eab2982-00-3tktq9yl62ggy.riker.replit.dev</Fit>
          <Fit w={39} className="text-[#50545a]">/map</Fit>
        </div>
        <svg className="ml-auto" width="16" height="21" viewBox="0 0 16 21"><path d="M8,1.200c4,0 6.300,2.900 6.300,6.300C14.300,12 10,15.500 8,19.500C6,15.500 1.700,12 1.700,7.500C1.700,4.100 4,1.200 8,1.200z" fill="none" stroke="currentColor" strokeWidth="2" /><circle cx="8" cy="7.500" r="2.700" fill="currentColor" /></svg>
        <svg className="ml-[20px]" width="24" height="16" viewBox="0 0 24 16" fill="none" stroke="currentColor" strokeWidth="2"><path d="M12,6H22V12H19.500V9.500H17.500V12H15V10H12a5.500,5.500 0 1 1 0,-4z" /><circle cx="7" cy="8" r="2.200" fill="currentColor" /></svg>
        <Star className="mr-[19px] ml-[17px]" size={21} strokeWidth={2} />
      </div>
      <svg className="ml-[22px]" width="21" height="21" viewBox="0 0 21 21" fill="none" stroke="currentColor" strokeWidth="2"><path d="M2,19l2.500-2.500c4,3 9,2 11.500-1c3-3.500 3-9 3.300-13.500c-5-.4-10,0-13.500,3.500c-3.500,3-4,8-1.300,11M2,13v6h4" /><path d="M12,5.500L7,11h4L9,15.500L14.500,10h-4z" fill="currentColor" strokeWidth=".6" /></svg>
      <div className="ml-[22px] flex h-[25px] w-[25px] items-center justify-center rounded-full bg-[#bf360c] text-[13px] font-medium text-white">H</div>
      <div className="ml-[30px] flex w-1 flex-col gap-[3px]">
        <i className="h-1 w-1 rounded-full bg-[#45484c]" /><i className="h-1 w-1 rounded-full bg-[#45484c]" /><i className="h-1 w-1 rounded-full bg-[#45484c]" />
      </div>
    </div>
    <div className="h-[2px] bg-[#dfe1e2]" />
  </div>
);

/* -------------------------------------------------------------- sidebar */

const nav = [
  { label: "Asset Lifecycle", Icon: Archive, w: 127 },
  { label: "Blocked Websites", Icon: Globe, w: 154 },
  { label: "CMDB", Icon: Database, w: 56 },
  { label: "Email Notifications", Icon: Mail, w: 165 },
  { label: "Map View", Icon: MapIcon, w: 88, active: true },
  { label: "Network Discovery", Icon: Router, w: 166 },
  { label: "Notifications", Icon: Bell, w: 112 },
  { label: "Prohibited Software", Icon: Shield, w: 175 },
  { label: "Reports", Icon: FileChartColumn, w: 67 },
  { label: "Router Setup", Icon: Router, w: 115 },
  { label: "Settings", Icon: Settings, w: 71 },
  { label: "Support Tickets", Icon: Ticket, w: 137 },
];
const RouterWifi = () => (
  <svg width="25" height="25" viewBox="0 0 24 24" fill="none" stroke="currentColor" strokeWidth="2" strokeLinecap="round" strokeLinejoin="round">
    <rect width="20" height="8" x="2" y="14" rx="2" /><path d="M6.010 18H6M10.010 18H10M15 10v4M17.840 7.170a4 4 0 0 0-5.660 0M20.660 4.340a8 8 0 0 0-11.310 0" />
  </svg>
);
const TicketIcon = () => (
  <svg width="25" height="25" viewBox="0 0 24 24" fill="none" stroke="currentColor" strokeWidth="2" strokeLinecap="round" strokeLinejoin="round">
    <path d="M2 9a3 3 0 0 1 0 6v2a2 2 0 0 0 2 2h16a2 2 0 0 0 2-2v-2a3 3 0 0 1 0-6V7a2 2 0 0 0-2-2H4a2 2 0 0 0-2 2ZM13 5v2M13 17v2M13 11v2" />
  </svg>
);

const Sidebar = () => (
  <aside className="flex h-full w-[320px] shrink-0 flex-col bg-[#2d3748] text-white">
    <div className="flex h-[160px] items-center pl-5">
      <div className="flex h-[80px] w-[76px] items-center justify-center rounded-[10px] bg-white">
        <svg width="28" height="27" viewBox="0 0 28 27">
          <defs><linearGradient id="lg" x1="0" y1="0" x2=".7" y2="1"><stop offset="0" stopColor="#20a4ea" /><stop offset=".55" stopColor="#1160b8" /><stop offset="1" stopColor="#143f94" /></linearGradient></defs>
          <path d="M10,0H19L22,5H13L7.500,13L13,21L17,17.500L19,15H14L17,10H26L28,13L18,27H10L0,13z" fill="url(#lg)" />
        </svg>
      </div>
      <div className="ml-[15px] flex flex-col pt-[3px] text-[25px] leading-[35px] font-bold">
        <div><Fit w={92}>IT Asset</Fit></div>
        <div><Fit w={105}>Manager</Fit></div>
      </div>
    </div>
    <div className="flex h-[632px] overflow-hidden">
      <nav className="-mt-[28px] ml-5 flex w-[265px] shrink-0 flex-col gap-[5px]">
        {nav.map(({ label, Icon, w, active }) => (
          <div key={label} className={`flex h-[50px] shrink-0 items-center gap-[15px] rounded-[5px] pl-5 text-[20px] ${active ? "bg-[#4299e1]" : ""}`}>
            {Icon === Router ? <RouterWifi /> : Icon === Ticket ? <TicketIcon /> : label === "Asset Lifecycle" ? (
              <svg width="25" height="25" viewBox="0 0 24 24" fill="none" stroke="currentColor" strokeWidth="2"><rect x="3" y="3" width="18" height="18" rx="2" /></svg>
            ) : <Icon size={25} strokeWidth={2} />}
            <Fit w={w} className="pt-[2px]">{label}</Fit>
          </div>
        ))}
      </nav>
      <div className="mt-[148px] ml-[10px] h-[484px] w-[5px] rounded-full bg-[#4a5568]" />
    </div>
    <div className="mt-[15px] flex h-[50px] items-center pl-10">
      <div className="flex h-[50px] w-[50px] items-center justify-center rounded-full bg-[#f5f5f4] text-[17px] font-semibold text-white">F</div>
      <div className="ml-[10px] flex w-[149px] flex-col pt-[2px]">
        <div className="text-[17.500px] leading-[23px] font-semibold"><Fit w={66}>finecons</Fit></div>
        <div className="text-[15px] leading-[20px] text-[#cbd5e0]"><Fit w={44}>Admin</Fit></div>
      </div>
      <svg width="20" height="20" viewBox="0 0 20 20" fill="none" stroke="#edf0f4" strokeWidth="1.700"><path d="M8.500,2.500H5a2,2 0 0 0-2,2V15.500a2,2 0 0 0 2,2H8.500M7.500,10H18.500M14,5.300L18.700,10L14,14.700" /></svg>
    </div>
  </aside>
);

/* --------------------------------------------------------- device panel */

const devices: [string, number, string, number][] = [
  ["10.240.1.194", 93, "Auto-Discovered", 115],
  ["CAM-SEC-006", 112, "Office Floor 1", 92],
  ["CAM-SEC-004", 112, "Warehouse Entry", 116],
  ["10.240.2.119", 93, "Network-Discovered", 140],
  ["CAM-SEC-007", 112, "Office Floor 2", 93],
  ["CAM-SEC-010", 109, "Conference Room", 123],
  ["CAM-SEC-008", 112, "Emergency Exit", 104],
  ["CAM-SEC-009", 112, "Server Room", 89],
  ["CAM-SEC-001", 109, "Main Building Entrance", 157],
  ["10.240.1.193", 93, "Auto-Discovered", 111],
];

const Panel = () => (
  <div className="flex h-full w-[359px] flex-col gap-[10px]">
    <div className="h-[40px] shrink-0 rounded-b-[10px] border border-t-0 border-[#e5e5e5] bg-white shadow-xs" />
    <div className="flex h-[862px] shrink-0 flex-col rounded-[10px] border border-[#e5e5e5] bg-white pl-[30px] shadow-xs">
      <div className="mt-[31px] ml-[71px] flex h-[25px] items-center text-[17.500px] font-medium text-black">
        <i className="mr-[5px] h-[10px] w-[10px] rounded-full bg-[#22c55e]" /><Fit w={47}>Active</Fit>
        <i className="mr-[5px] ml-[20px] h-[10px] w-[10px] rounded-full bg-[#ef4444]" /><Fit w={58}>Inactive</Fit>
      </div>
      <div className="mt-[14px] flex flex-col gap-[10px]">
        {devices.map(([name, nw, place, pw], i) => (
          <div key={i} className={`flex h-[67px] w-[297px] items-center rounded-[10px] border border-[#e5e5e5] pl-[10px] ${i === 9 ? "bg-[#f9fafb]" : "bg-white"}`}>
            <i className="h-[10px] w-[10px] rounded-full bg-[#ef4444]" />
            <Monitor className="ml-[10px] text-black" size={20} strokeWidth={2} />
            <div className="ml-[15px] flex flex-col items-start text-white">
              <div className="h-[25px] bg-[#3367d1] text-[17.500px] leading-[27px] font-semibold" style={{ width: nw }}><Fit w={nw}>{name}</Fit></div>
              <div className="h-[20px] bg-[#3367d1] text-[15px] leading-[20px]" style={{ width: pw }}><Fit w={i === 9 ? pw : pw - 4}>{place}</Fit></div>
            </div>
          </div>
        ))}
      </div>
    </div>
  </div>
);

const Content = () => (
  <main className="flex h-full w-[1581px] items-start overflow-hidden bg-white pl-5">
    <div className="relative h-[556px] w-[1142px] shrink-0 overflow-hidden">
      <CityMap />
      <div className="absolute right-0 bottom-0 flex h-[21px] items-center bg-white/80 px-[7px] pt-px font-['Liberation_Sans',sans-serif] text-[15px] text-[#333]">
        <svg className="mr-1" width="15" height="10" viewBox="0 0 15 10"><rect width="15" height="5" fill="#4C7BE1" /><rect y="5" width="15" height="5" fill="#FFD500" /></svg>
        <Fit w={45} className="text-[#0078a8]">Leaflet</Fit>
        <Fit w={27}>{" | © "}</Fit>
        <Fit w={106} className="text-[#0078a8]">OpenStreetMap</Fit>
        <Fit w={79} className="ml-[4px]">contributors</Fit>
      </div>
    </div>
    <div className="h-[556px] w-[399px] shrink-0 bg-white shadow-[8px_8px_12px_-2px_rgba(0,0,0,0.07)]">
      <div className="h-[911px] pl-5"><Panel /></div>
    </div>
  </main>
);

const PageScroll = () => (
  <div className="flex h-full w-[19px] flex-col items-center bg-[#fcfcfc]">
    <svg className="mt-[7px]" width="13" height="9" viewBox="0 0 13 9"><path d="M5.500,.8q1-1 2,0L12.500,7q.5,2-1,2H1.500q-1.500,0-1-2z" fill="#8b8b8b" /></svg>
    <div className="mt-[260px] h-[613px] w-[11px] rounded-full bg-[#8b8b8b]" />
    <svg className="mt-[8px]" width="13" height="9" viewBox="0 0 13 9"><path d="M5.500,8.200q1,1 2,0L12.500,2q.5-2-1-2H1.500q-1.500,0-1,2z" fill="#8b8b8b" /></svg>
  </div>
);

/* -------------------------------------------------------------- taskbar */

const Flower = ({ x, y, r, c }: { x: number; y: number; r: number; c: string }) => (
  <g transform={`translate(${x} ${y})`}>
    {[0, 60, 120, 180, 240, 300].map((a) => <ellipse key={a} transform={`rotate(${a})`} cx="0" cy={-r * 0.55} rx={r * 0.25} ry={r * 0.45} fill={c} />)}
    <circle r={r * 0.22} fill="#f9d84a" />
  </g>
);

const Taskbar = () => (
  <div className="flex h-[60px] items-center border-t border-[#3b3d3c] bg-[#1c1c1c] text-[15px] text-white">
    <div className="flex w-[695px] items-center pb-[5px] pl-[26px]">
      <svg width="34" height="36" viewBox="0 0 34 36">
        <defs><linearGradient id="icc" x1="0" y1="0" x2="0" y2="1"><stop offset="0" stopColor="#1d9fd8" /><stop offset=".5" stopColor="#0c85b4" /><stop offset="1" stopColor="#0d6b4d" /></linearGradient></defs>
        <path d="M13,8C4,11 0,18 2,26L6,30C5,20 8,13 13,8zM16,8C10,15 7,22 7,32L12,34C11,25 13,16 18,9zM20,12C15,18 14,26 14,34L18,32C18,25 20,19 24,14zM27,16C23,20 21,26 20,32C26,28 28,22 27,16z" fill="url(#icc)" />
        <circle cx="23" cy="10" r="10" fill="#c42b1c" />
        <text x="23" y="15" textAnchor="middle" fontSize="14" fill="#fff">9</text>
      </svg>
      <div className="ml-1 flex flex-col leading-[20px]">
        <div><Fit w={52}>NZ - SA</Fit></div><div><Fit w={26} className="text-[#ff99a4]">Live</Fit></div>
      </div>
    </div>
    <svg width="29" height="29" viewBox="0 0 29 29">
      <defs><linearGradient id="win" x1="0" y1="0" x2="1" y2="1"><stop offset="0" stopColor="#7ff0ff" /><stop offset="1" stopColor="#0a8df5" /></linearGradient></defs>
      <path d="M0,1q0-1 1-1H14V14H0zM15,0H28q1,0 1,1V14H15zM0,15H14V29H1q-1,0-1-1zM15,15H29V28q0,1-1,1H15z" fill="url(#win)" />
    </svg>
    <div className="ml-[18px] flex h-[38px] w-[273px] items-center rounded-full bg-[#f3f3f3] pl-[13px] text-[#5a5a5a]">
      <Search size={21} strokeWidth={2.3} className="text-[#222]" />
      <div className="ml-[11px] text-[17.500px]"><Fit w={52}>Search</Fit></div>
      <svg className="mr-[5px] ml-auto" width="54" height="28" viewBox="0 0 54 28">
        <Flower x={5} y={5} r={4} c="#f08a5c" /><Flower x={5} y={21} r={6.5} c="#8a5cd0" /><Flower x={46} y={14} r={8.500} c="#e85cc0" />
        <path d="M22,19l5,1l1,6h-3z" fill="#8a7cc0" />
        <path d="M10,14C8,9 11,5 15,4C18,1 24,1 27,3C32,4 35,8 35,12C37,16 35,21 31,21C28,23 25,21 22,20C17,21 10,19 10,14z" fill="#ee7d60" />
        <path d="M11,12C15,9 17,13 20,10M16,5C19,8 22,5 24,9M23,14C27,11 29,15 33,12M15,16C18,14 20,18 24,16M27,5C28,8 31,7 32,10" fill="none" stroke="#d4614a" strokeWidth=".8" />
      </svg>
    </div>
    <svg className="ml-[16px]" width="30" height="28" viewBox="0 0 30 28"><rect x="7" width="23" height="20" rx="1" fill="#f5f5f5" /><rect y="8" width="22" height="20" rx="1" fill="#777" /><rect x="7" y="8" width="15" height="12" fill="#c4c4c4" /></svg>
    <svg className="ml-[25px]" width="30" height="28" viewBox="0 0 30 28"><path d="M0,3q0-2 2-2H9l3,3H16V12H0z" fill="#dd9b06" /><rect y="4" width="30" height="23" rx="1.500" fill="#fbc93d" /><path d="M0,9V5.500q0-1.500 1.500-1.500H30V9z" fill="#ffd966" /><path d="M5,27V22q0-2.500 2.500-2.500H22.500Q25,19.500 25,22V27z" fill="#0f7dd4" /><path d="M9,23.500h12" stroke="#0a4f96" strokeWidth="1.500" /></svg>
    <div className="ml-[25px] flex h-full w-[29px] flex-col items-center pt-[15px]">
      <svg width="29" height="28" viewBox="0 0 29 28"><rect x="7" width="22" height="28" rx="1.500" fill="#185c37" /><path d="M7,1.500Q7,0 8.500,0H18V14H7z" fill="#21a366" /><path d="M18,0H27.500Q29,0 29,1.500V7H18z" fill="#33c481" /><path d="M18,7H29V14H18z" fill="#21a366" /><path d="M7,14H18V21H7zM18,14H29V21H18z" fill="#107c41" /><rect y="6" width="15" height="16" rx="1.500" fill="#107c41" /><text x="7.500" y="18.500" textAnchor="middle" fontSize="12" fontWeight="bold" fill="#fff">X</text></svg>
      <i className="mt-[6px] h-1 w-2 rounded-full bg-[#9a9a9a]" />
    </div>
    <div className="ml-[16px] flex h-[50px] w-[50px] flex-col items-center rounded-[6px] border border-[#353535] bg-[#2a2a2a]">
      <svg className="mt-[1px]" width="46" height="42" viewBox="0 0 46 42">
        <path d="M23,23L10.010,15.500A15,15 0 0 1 35.990,15.500z" fill="#ea4335" /><path d="M23,23L35.990,15.500A15,15 0 0 1 23,38z" fill="#fbbc04" /><path d="M23,23L23,38A15,15 0 0 1 10.010,15.500z" fill="#34a853" />
        <path d="M10,15.500L17,27L23,16H36z" fill="#ea4335" /><path d="M23,38L29.500,26.500L25,16H36z" fill="#fbbc04" />
        <circle cx="23" cy="23" r="7.300" fill="#fff" /><circle cx="23" cy="23" r="5.700" fill="#4285f4" />
        <circle cx="33" cy="11" r="10" fill="#bf360c" /><text x="33" y="15" textAnchor="middle" fontSize="11" fontWeight="600" fill="#f4d9cf">H</text>
      </svg>
      <i className="mt-[1px] h-1 w-5 rounded-full bg-[#4cc2ff]" />
    </div>
    <div className="mr-[26px] ml-auto flex items-center">
      <ChevronUp size={20} strokeWidth={2.3} />
      <svg className="ml-[19px]" width="23" height="20" viewBox="0 0 23 20"><path d="M4,12a4.500,4.500 0 0 1 1-8C8,0 15,0 17,5l-8,9H5z" fill="#8c8c8c" /><path d="M4,15a4,4 0 0 1 0-8.500c4-1 6,0 7.500,3l5,2L15,15z" fill="#d8d8d8" /><circle cx="15.500" cy="13" r="5.800" fill="#fce100" /><path d="M15.500,9.500v4.500M15.500,15.500v1.500" stroke="#222" strokeWidth="1.600" /></svg>
      <div className="ml-[19px] flex w-[32px] flex-col items-center pb-[3px] leading-[20px]"><Fit w={29}>ENG</Fit><Fit w={15}>IN</Fit></div>
      <svg className="ml-[22px]" width="20" height="16" viewBox="0 0 20 16" fill="none" stroke="#fff" strokeWidth="1.700"><path d="M.7,6.500a13,13 0 0 1 18.600,0M3.300,9a9.500,9.500 0 0 1 13.400,0M6,11.500a5.700,5.700 0 0 1 8,0" /><circle cx="10" cy="14" r="1.700" fill="#fff" stroke="none" /></svg>
      <svg className="ml-[9px]" width="21" height="18" viewBox="0 0 21 18" fill="none" stroke="#fff" strokeWidth="1.500"><path d="M1,6.500H4L9,2V16L4,11.500H1zM11.500,6a4.500,4.500 0 0 1 0,6" /><path d="M14,4a7.500,7.500 0 0 1 0,10M16.500,1.500a11,11 0 0 1 0,15" stroke="#666" /></svg>
      <svg className="ml-[9px]" width="21" height="18" viewBox="0 0 21 18" fill="none" stroke="#fff" strokeWidth="1.500"><path d="M11,4H16q2,0 2,2V13.500q0,2-2,2H4q-2,0-2-2M18.500,8h1.500v3h-1.500" /><path d="M1,12.500C-1,7 2,2 7,0C10,3 10,9 6,11.500C4,12 3,11.500 1,12.500z" fill="#fff" stroke="none" /></svg>
      <div className="ml-[20px] flex w-[78px] flex-col items-end pb-[3px] leading-[20px]"><Fit w={36}>19:00</Fit><Fit w={78}>22-07-2025</Fit></div>
      <svg className="ml-[10px]" width="18" height="19" viewBox="0 0 18 19" fill="none" stroke="#fff" strokeWidth="1.500"><path d="M10,2.500C6,1.500 3,4 3,8V11.500L1,15H16L14,12M6,15.500a2.800,2.800 0 0 0 5.500,0M7,6.500h4l-4,4.500h4M12.500,1h3.500l-3.500,4h3.500" /></svg>
    </div>
  </div>
);

export default function App() {
  return (
    <div className="flex h-[1080px] w-[1920px] flex-col overflow-hidden bg-white font-['Noto_Sans',sans-serif]">
      <TabStrip />
      <Toolbar />
      <div className="flex h-[911px] overflow-hidden">
        <Sidebar />
        <Content />
        <PageScroll />
      </div>
      <Taskbar />
    </div>
  );
}
